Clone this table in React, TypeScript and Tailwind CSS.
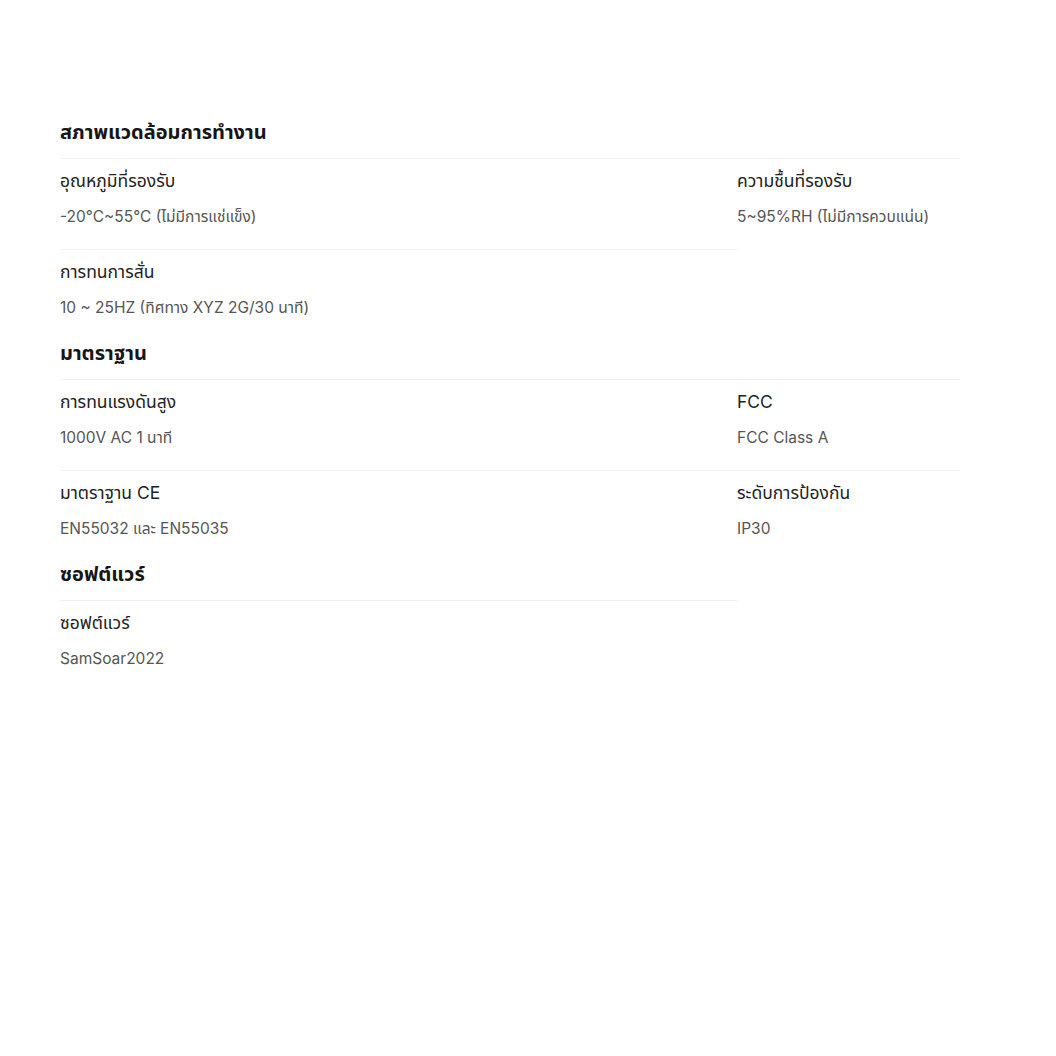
const sections = [
  {
    title: "สภาพแวดล้อมการทำงาน",
    items: [
      { label: "อุณหภูมิที่รองรับ", value: "-20°C~55°C (ไม่มีการแช่แข็ง)", wide: true },
      { label: "ความชื้นที่รองรับ", value: "5~95%RH (ไม่มีการควบแน่น)", wide: false },
      { label: "การทนการสั่น", value: "10 ~ 25HZ (ทิศทาง XYZ 2G/30 นาที)", wide: true },
    ],
  },
  {
    title: "มาตราฐาน",
    items: [
      { label: "การทนแรงดันสูง", value: "1000V AC 1 นาที", wide: true },
      { label: "FCC", value: "FCC Class A", wide: false },
      { label: "มาตราฐาน CE", value: "EN55032 และ EN55035", wide: true },
      { label: "ระดับการป้องกัน", value: "IP30", wide: false },
    ],
  },
  {
    title: "ซอฟต์แวร์",
    items: [{ label: "ซอฟต์แวร์", value: "SamSoar2022", wide: true }],
  },
];

export default function App() {
  return (
    <div
      className="min-h-[1056px] bg-white px-[60px] pt-[119px]"
      style={{ fontFamily: 'Inter, "Noto Sans Thai", "Noto Sans", sans-serif' }}
    >
      <div className="w-[900px]">
        {sections.map((s) => (
          <div key={s.title}>
            <h3 className="mt-[1px] mb-[14px] h-[24px] text-[20px] font-bold leading-[24px] text-[#161616]">
              {s.title}
            </h3>
            <div className="grid grid-cols-[677px_223px]">
              {s.items.map((it) => (
                <div
                  key={it.label}
                  className={
                    "flex h-[91px] flex-col border-t border-[#f0f0f0] pt-[10px] " +
                    (it.wide ? "col-start-1" : "col-start-2")
                  }
                >
                  <div className="h-[24px] text-[17.5px] leading-[24px] text-[#222]">{it.label}</div>
                  <div className="mt-[13px] h-[22px] text-[15.5px] leading-[22px] text-[#555]">{it.value}</div>
                </div>
              ))}
            </div>
          </div>
        ))}
      </div>
    </div>
  );
}
